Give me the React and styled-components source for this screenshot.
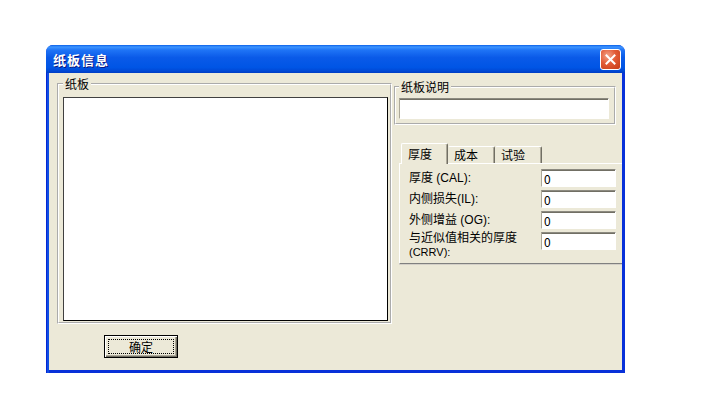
import React from 'react'
import styled, { createGlobalStyle } from 'styled-components'

const GlobalStyle = createGlobalStyle`
  body {
    margin: 0;
    background: #fff;
    font-family: "Noto Sans CJK SC", "DejaVu Sans", sans-serif;
    font-size: 12px;
    color: #000;
  }
`

const Page = styled.div`
  padding: 45px 0 0 46px;
`

const Window = styled.div`
  width: 579px;
  height: 328px;
  box-sizing: border-box;
  display: flex;
  flex-direction: column;
  background: linear-gradient(90deg, #0019cf 0, #0831d9 1px, #166aee 2px, #0831d9 3px);
  background-color: #0831d9;
  border-radius: 7px 7px 0 0;
  overflow: hidden;
`

const TitleBar = styled.div`
  height: 28px;
  flex: none;
  display: flex;
  align-items: center;
  justify-content: space-between;
  padding: 0 4px 0 7px;
  background: linear-gradient(
    180deg,
    #0a5fe8 0%,
    #3d95ff 7%,
    #1f74f6 18%,
    #0a5ae8 45%,
    #0055e5 80%,
    #0049d6 92%,
    #003dc4 100%
  );
`

const Title = styled.span`
  color: #fff;
  font-weight: bold;
  font-size: 13px;
  letter-spacing: 1px;
  text-shadow: 1px 1px 0 #0a1883;
`

const CloseButton = styled.div`
  width: 21px;
  height: 21px;
  box-sizing: border-box;
  border: 1px solid #fff;
  border-radius: 3px;
  background: radial-gradient(circle at 35% 30%, #f3a288 0%, #e25b37 45%, #c53a14 100%);
  display: flex;
  align-items: center;
  justify-content: center;
`

const Body = styled.div`
  flex: 1;
  margin: 0 3px 3px;
  background: #ece9d8;
  display: flex;
  overflow: hidden;
`

const LeftCol = styled.div`
  flex: none;
  width: 335px;
  margin-left: 8px;
  padding-top: 4px;
`

const RightCol = styled.div`
  flex: none;
  width: 240px;
  margin-left: 2px;
  padding-top: 7px;
`

const Group = styled.fieldset`
  margin: 0;
  box-sizing: border-box;
  width: ${p => p.$width}px;
  border: 2px groove #fff;
  padding: ${p => p.$pad};
`

const Legend = styled.legend`
  padding: 0 2px;
  line-height: 14px;
  font-size: 12px;
`

const ListBox = styled.div`
  height: 224px;
  box-sizing: border-box;
  background: #fff;
  border: 1px solid;
  border-color: #404040 #000 #000 #404040;
`

const Button = styled.div`
  position: relative;
  width: 74px;
  height: 23px;
  box-sizing: border-box;
  margin: 11px 0 0 47px;
  border: 1px solid #000;
  background: #ece9d8;
  box-shadow: inset 1px 1px 0 #fff, inset -1px -1px 0 #716f64, inset -2px -2px 0 #aca899;
  display: flex;
  align-items: center;
  justify-content: center;
  font-size: 12px;
  &::after {
    content: '';
    position: absolute;
    inset: 3px;
    border: 1px dotted #000;
  }
`

const TextBox = styled.div`
  box-sizing: border-box;
  width: ${p => p.$width}px;
  height: ${p => p.$height}px;
  background: #fff;
  border: 1px solid;
  border-color: #8c8a80 #fff #fff #aca899;
  box-shadow: inset 0 1px 0 #716f64;
  padding: 1px 2px 0;
  font-size: 12px;
  line-height: 15px;
`

const TabStrip = styled.div`
  display: flex;
  align-items: flex-end;
  margin: 18px 0 0 7px;
  height: 20px;
  position: relative;
  z-index: 1;
`

const Tab = styled.div`
  width: 47px;
  box-sizing: border-box;
  height: ${p => (p.$active ? 21 : 17)}px;
  margin-bottom: ${p => (p.$active ? -1 : 0)}px;
  background: #ece9d8;
  border-top: 1px solid #fff;
  border-left: 1px solid ${p => (p.$active ? '#fff' : 'transparent')};
  border-right: 1px solid #716f64;
  box-shadow: inset -1px 0 0 #aca899;
  border-radius: 2px 2px 0 0;
  padding: ${p => (p.$active ? '2px 0 0 6px' : '0 0 0 5px')};
  line-height: 15px;
  font-size: 12px;
`

const Panel = styled.div`
  margin-left: 5px;
  width: 240px;
  height: 101px;
  box-sizing: border-box;
  border-top: 1px solid #fff;
  border-left: 1px solid #fff;
  border-bottom: 1px solid #808080;
  box-shadow: 0 1px 0 #d4d0c8;
  padding: 5px 0 0 9px;
  display: grid;
  grid-template-columns: 132px 75px;
  grid-auto-rows: 18px;
  row-gap: 3px;
`

const Label = styled.div`
  font-family: "Liberation Sans", "Noto Sans CJK SC", sans-serif;
  font-size: 12px;
  line-height: 14px;
  margin-top: ${p => (p.$top ? -1 : 0)}px;
  align-self: ${p => (p.$top ? 'start' : 'center')};
  white-space: nowrap;
`

const SubLine = styled.div`
  font-size: 11px;
  line-height: 14px;
`

const fields = [
  { label: '厚度 (CAL):' },
  { label: '内侧损失(IL):' },
  { label: '外侧增益 (OG):' },
  { label: '与近似值相关的厚度', sub: '(CRRV):' },
]

const CloseIcon = () => (
  <svg width="11" height="11" viewBox="0 0 11 11">
    <path d="M1.5 1.5 L9.5 9.5 M9.5 1.5 L1.5 9.5" stroke="#fff" strokeWidth="2" strokeLinecap="square" />
  </svg>
)

const App = () => {
  return (
    <Page>
      <GlobalStyle />
      <Window>
        <TitleBar>
          <Title>纸板信息</Title>
          <CloseButton><CloseIcon /></CloseButton>
        </TitleBar>
        <Body>
          <LeftCol>
            <Group $width={335} $pad="6px 2px 1px 4px">
              <Legend>纸板</Legend>
              <ListBox />
            </Group>
            <Button>确定</Button>
          </LeftCol>
          <RightCol>
            <Group $width={222} $pad="4px 3px 4px 3px">
              <Legend>纸板说明</Legend>
              <TextBox $width={210} $height={21} />
            </Group>
            <TabStrip>
              <Tab $active>厚度</Tab>
              <Tab>成本</Tab>
              <Tab>试验</Tab>
            </TabStrip>
            <Panel>
              {fields.map(f => (
                <React.Fragment key={f.label}>
                  <Label $top={!!f.sub}>
                    {f.label}
                    {f.sub && <SubLine>{f.sub}</SubLine>}
                  </Label>
                  <TextBox $width={75} $height={18}>0</TextBox>
                </React.Fragment>
              ))}
            </Panel>
          </RightCol>
        </Body>
      </Window>
    </Page>
  )
}

export default App
